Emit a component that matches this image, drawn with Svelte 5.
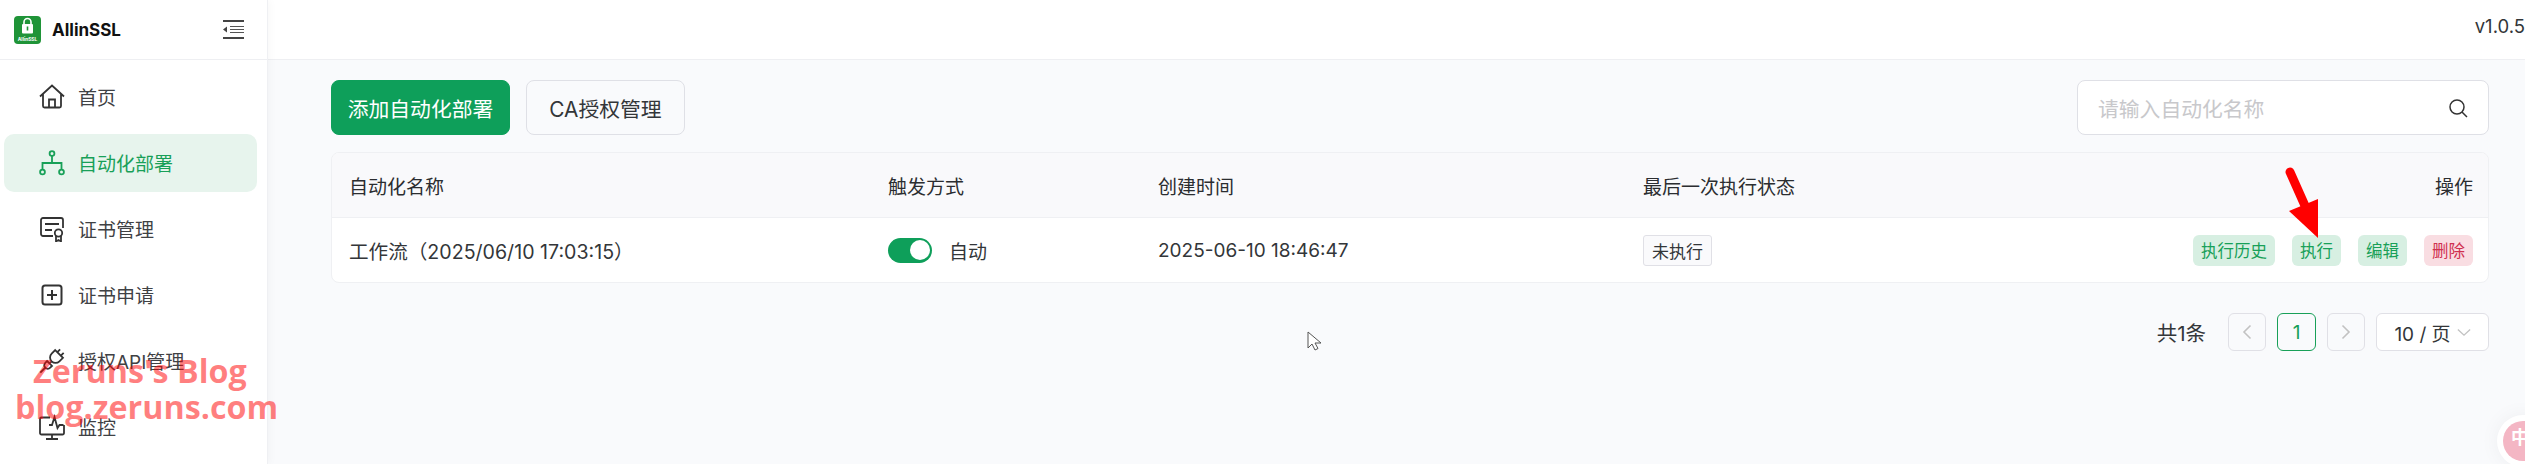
<script lang="ts">
	const menu = [
		{ label: '首页', icon: 'home' },
		{ label: '自动化部署', icon: 'flow', active: true },
		{ label: '证书管理', icon: 'cert' },
		{ label: '证书申请', icon: 'plus' },
		{ label: '授权API管理', icon: 'plug' },
		{ label: '监控', icon: 'monitor' }
	];

	const actions = [
		{ label: '执行历史' },
		{ label: '执行' },
		{ label: '编辑' },
		{ label: '删除', danger: true }
	];
</script>

<div class="page">
	<aside class="sidebar">
		<div class="brand">
			<div class="brand-left">
				<svg class="logo" viewBox="0 0 27 28" width="27" height="28">
					<rect width="27" height="28" rx="4" fill="#1f9438" />
					<path d="M10 8V6a3.500 3.500 0 0 1 7 0v2" fill="none" stroke="#fff" stroke-width="1.600" />
					<rect x="8" y="8" width="11" height="9.500" rx="1" fill="#fff" />
					<rect x="12.700" y="10.500" width="1.600" height="4" fill="#1f9438" />
					<text x="13.500" y="24.500" class="logo-text">AllinSSL</text>
				</svg>
				<span class="brand-name">AllinSSL</span>
			</div>
			<svg class="collapse" viewBox="0 0 21 19" width="21" height="19">
				<path d="M0 1h21M0 18h21" stroke="#444" stroke-width="1.800" />
				<path d="M7 6.500h14M7 9.500h14M7 12.500h14" stroke="#555" stroke-width="1.200" />
				<path d="M0 9.500l4-3v6z" fill="#444" />
			</svg>
		</div>
		<nav class="menu">
			{#each menu as item}
				<div class="menu-item" class:active={item.active}>
					<svg class="menu-icon" viewBox="0 0 26 26" width="26" height="26" fill="none" stroke="currentColor" stroke-width="1.800">
						{#if item.icon === 'home'}
							<path d="M1 12.500 13 1.500l12 11M4 10v12a1.500 1.500 0 0 0 1.500 1.500h15A1.500 1.500 0 0 0 22 22V10M10 23.500V15.500h6v8" />
						{:else if item.icon === 'flow'}
							<circle cx="13" cy="3.500" r="2.400" />
							<circle cx="3.500" cy="22" r="2.400" />
							<circle cx="22.500" cy="22" r="2.400" />
							<path d="M13 6v7M3.500 19.500V13h19v6.500" />
						{:else if item.icon === 'cert'}
							<path d="M14 20H4a2 2 0 0 1-2-2V4a2 2 0 0 1 2-2h18a2 2 0 0 1 2 2v8M6 8h14M6 14h7" />
							<circle cx="19.500" cy="17" r="3.700" />
							<path d="M17 20v5.500l2.500-1.500 2.500 1.500V20" />
						{:else if item.icon === 'plus'}
							<rect x="3.500" y="3.500" width="19" height="19" rx="2.500" stroke-width="2" />
							<path d="M13 8v10M8 13h10" stroke-width="2" />
						{:else if item.icon === 'plug'}
							<g transform="rotate(45 13 13)">
								<path d="M10.500 -1v4M15.500 -1v4" />
								<path d="M7.500 3h11v5a5.500 5.500 0 0 1-11 0z" />
								<path d="M13 13.500v3" />
								<path d="M9.500 16.500h7v2.500a3.500 3.500 0 0 1-7 0zM13 22.500v7" />
							</g>
						{:else}
							<path d="M25 11v8a1.500 1.500 0 0 1-1.500 1.500h-21A1.500 1.500 0 0 1 1 19V5a1.500 1.500 0 0 1 1.500-1.500H11M13 20.500V25M7 25h12M10 11h3l2.500-8 3 11 2-3h4" />
						{/if}
					</svg>
					<span>{item.label}</span>
				</div>
			{/each}
		</nav>
	</aside>

	<div class="main">
		<header class="topbar"><span class="version">v1.0.5</span></header>
		<div class="content">
			<div class="toolbar">
				<div class="buttons">
					<button class="btn primary">添加自动化部署</button>
					<button class="btn second">CA授权管理</button>
				</div>
				<div class="search">
					<span class="placeholder">请输入自动化名称</span>
					<svg viewBox="0 0 20 20" width="20" height="20" fill="none" stroke="#333" stroke-width="1.500">
						<circle cx="9" cy="9" r="7" />
						<path d="M14 14l5 5" />
					</svg>
				</div>
			</div>

			<div class="table">
				<div class="row head">
					<div>自动化名称</div>
					<div>触发方式</div>
					<div>创建时间</div>
					<div>最后一次执行状态</div>
					<div class="right">操作</div>
				</div>
				<div class="row body">
					<div class="name">工作流（2025/06/10 17:03:15）</div>
					<div class="trigger">
						<span class="switch"><span class="knob"></span></span>
						<span>自动</span>
					</div>
					<div>2025-06-10 18:46:47</div>
					<div><span class="status">未执行</span></div>
					<div class="right actions">
						{#each actions as action}
							<span class="action" class:danger={action.danger}>{action.label}</span>
						{/each}
					</div>
				</div>
			</div>

			<div class="pagination">
				<span class="total">共1条</span>
				<span class="page-btn disabled">
					<svg viewBox="0 0 10 16" width="10" height="16" fill="none" stroke="#c2c2c2" stroke-width="1.600"><path d="M8.500 1.500 2 8l6.500 6.500" /></svg>
				</span>
				<span class="page-btn current">1</span>
				<span class="page-btn disabled">
					<svg viewBox="0 0 10 16" width="10" height="16" fill="none" stroke="#c2c2c2" stroke-width="1.600"><path d="M1.500 1.500 8 8l-6.500 6.500" /></svg>
				</span>
				<span class="size">
					10 / 页
					<svg viewBox="0 0 16 10" width="14" height="9" fill="none" stroke="#c2c2c2" stroke-width="1.500"><path d="M1 1.500 8 8l7-6.500" /></svg>
				</span>
			</div>
		</div>
	</div>

	<!-- things painted over the screenshot -->
	<div class="watermark">
		<div class="wm-first">Zeruns's Blog</div>
		<div>blog.zeruns.com</div>
	</div>
	<svg class="arrow" viewBox="0 0 40 76" width="40" height="76">
		<path d="M6 8 22 44" stroke="#ff0000" stroke-width="9" stroke-linecap="round" />
		<path d="M5 47 34 35V74z" fill="#ff0000" />
	</svg>
	<svg class="cursor" viewBox="0 0 15 22" width="15" height="22">
		<path d="M1 1v16l4-4 3 6 3-1.500-3-5.500h6z" fill="#fff" stroke="#555" stroke-width="1" />
	</svg>
	<div class="bubble"><span class="bubble-inner">中</span></div>
</div>

<style>
	:global(body) {
		margin: 0;
		background: #f9fafc;
	}

	.page {
		position: relative;
		display: flex;
		width: 2525px;
		height: 464px;
		overflow: hidden;
		font-family: Inter, 'Noto Sans CJK SC', sans-serif;
		font-size: 19px;
		color: #333639;
	}

	.sidebar {
		position: relative;
		width: 267px;
		flex-shrink: 0;
		background: #fff;
		border-right: 1px solid #eff0f3;
		box-shadow: 2px 0 8px rgba(0, 0, 0, 0.03);
	}

	.brand {
		height: 59px;
		display: flex;
		align-items: center;
		justify-content: space-between;
		padding: 0 23px 0 14px;
		border-bottom: 1px solid #eeeff2;
	}

	.brand-left {
		display: flex;
		align-items: center;
		gap: 11px;
	}

	.logo-text {
		font-size: 4.800px;
		font-weight: 700;
		fill: #fff;
		text-anchor: middle;
	}

	.brand-name {
		font-size: 17px;
		font-weight: 700;
		color: #111;
	}

	.menu {
		display: flex;
		flex-direction: column;
		gap: 8px;
		padding: 8px 10px 0 4px;
	}

	.menu-item {
		height: 58px;
		display: flex;
		align-items: center;
		gap: 13px;
		padding-left: 35px;
		border-radius: 10px;
		color: #3f4144;
	}

	.menu-item span {
		position: relative;
		top: -1px;
	}

	.menu-icon {
		color: #333;
	}

	.menu-item.active {
		background: #e7f4ed;
		color: #18a058;
	}

	.menu-item.active .menu-icon {
		color: #18a058;
	}

	.main {
		flex: 1;
		min-width: 0;
		display: flex;
		flex-direction: column;
	}

	.topbar {
		height: 51px;
		flex-shrink: 0;
		display: flex;
		align-items: center;
		justify-content: flex-end;
		background: #fff;
		border-bottom: 1px solid #eeeff2;
		padding-bottom: 8px;
	}

	.version {
		font-size: 18.500px;
	}

	.content {
		padding: 20px 36px 0 63px;
	}

	.toolbar {
		display: flex;
		justify-content: space-between;
		height: 55px;
	}

	.buttons {
		display: flex;
		gap: 16px;
	}

	.btn {
		height: 55px;
		padding: 0;
		border: 1px solid #dfe0e6;
		border-radius: 8px;
		background: transparent;
		font: inherit;
		font-size: 20.800px;
		color: #333639;
	}

	.btn.primary {
		width: 179px;
		background: #0e9f5a;
		border-color: #0e9f5a;
		color: #fff;
	}

	.btn.second {
		width: 159px;
	}

	.search {
		width: 412px;
		height: 55px;
		box-sizing: border-box;
		display: flex;
		align-items: center;
		justify-content: space-between;
		padding: 0 20px;
		background: #fff;
		border: 1px solid #dfe0e6;
		border-radius: 8px;
		font-size: 20.800px;
	}

	.placeholder {
		color: #c8c8cb;
	}

	.table {
		margin-top: 17px;
		border: 1px solid #eff0f3;
		border-radius: 8px;
		background: #fff;
		overflow: hidden;
	}

	.row {
		display: grid;
		grid-template-columns: 539px 270px 485px 1fr 400px;
		align-items: center;
		height: 64px;
		padding: 0 15px 0 17px;
	}

	.row.head {
		background: #f9f9fb;
		border-bottom: 1px solid #eff0f3;
		color: #2b2d30;
	}

	.name {
		font-size: 19.600px;
	}

	.right {
		justify-self: end;
	}

	.trigger {
		display: flex;
		align-items: center;
		gap: 17px;
	}

	.switch {
		display: flex;
		align-items: center;
		justify-content: flex-end;
		width: 44px;
		height: 25px;
		box-sizing: border-box;
		padding-right: 2px;
		background: #0e9f5a;
		border-radius: 13px;
	}

	.knob {
		width: 20px;
		height: 20px;
		background: #fff;
		border-radius: 50%;
	}

	.status {
		display: inline-flex;
		align-items: center;
		height: 31px;
		box-sizing: border-box;
		padding: 0 8px;
		background: #fafafc;
		border: 1px solid #e0e0e6;
		border-radius: 3px;
		font-size: 17px;
	}

	.actions {
		display: flex;
		gap: 17px;
	}

	.action {
		display: inline-flex;
		align-items: center;
		height: 31px;
		padding: 0 8px;
		border-radius: 6px;
		background: #d7efe2;
		color: #18a058;
		font-size: 16.500px;
	}

	.action.danger {
		background: #f9dde2;
		color: #d03050;
	}

	.pagination {
		display: flex;
		justify-content: flex-end;
		align-items: center;
		gap: 11px;
		margin-top: 30px;
	}

	.total {
		margin-right: 11px;
		font-size: 20.500px;
	}

	.page-btn {
		width: 38px;
		height: 38px;
		box-sizing: border-box;
		display: flex;
		align-items: center;
		justify-content: center;
		border: 1px solid #e0e0e6;
		border-radius: 6px;
	}

	.page-btn.current {
		width: 39px;
		border-color: #18a058;
		color: #18a058;
	}

	.size {
		width: 113px;
		height: 38px;
		box-sizing: border-box;
		display: flex;
		align-items: center;
		justify-content: center;
		gap: 6px;
		background: #fff;
		border: 1px solid #e0e0e6;
		border-radius: 6px;
		white-space: nowrap;
	}

	.watermark {
		position: absolute;
		left: 15px;
		top: 352px;
		font-family: 'Open Sans', sans-serif;
		font-size: 32.300px;
		font-weight: 700;
		line-height: 36px;
		color: rgba(255, 0, 0, 0.5);
		white-space: nowrap;
	}

	.wm-first {
		margin-left: 18px;
	}

	.arrow {
		position: absolute;
		left: 2284px;
		top: 164px;
	}

	.cursor {
		position: absolute;
		left: 1307px;
		top: 331px;
	}

	.bubble {
		position: absolute;
		left: 2497px;
		top: 415px;
		width: 52px;
		height: 52px;
		border-radius: 50%;
		background: #fff;
		box-shadow: 0 0 20px rgba(0, 0, 0, 0.05);
		display: flex;
		align-items: center;
		justify-content: center;
	}

	.bubble-inner {
		width: 40px;
		height: 40px;
		border-radius: 50%;
		background: #f4b6c4;
		color: #fff;
		font-weight: 700;
		font-size: 18px;
		padding-left: 8px;
		box-sizing: border-box;
		line-height: 34px;
	}
</style>
